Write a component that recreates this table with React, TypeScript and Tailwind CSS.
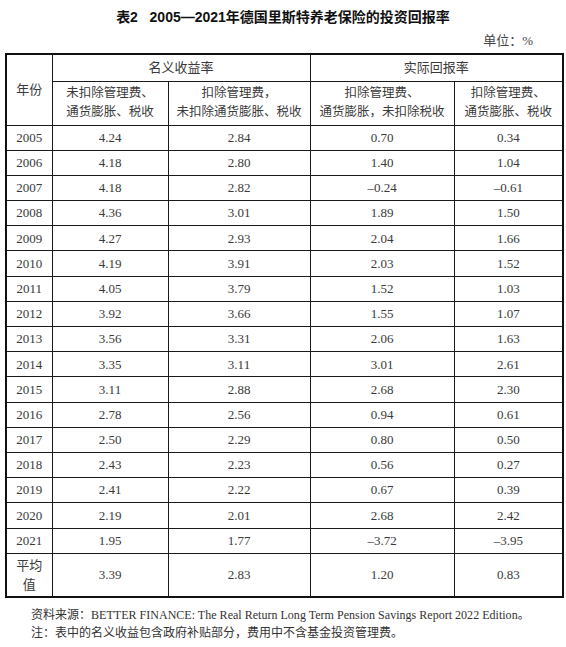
import React from 'react'

const rows: [string, string, string, string, string][] = [
    ['2005', '4.24', '2.84', '0.70', '0.34'],
    ['2006', '4.18', '2.80', '1.40', '1.04'],
    ['2007', '4.18', '2.82', '–0.24', '–0.61'],
    ['2008', '4.36', '3.01', '1.89', '1.50'],
    ['2009', '4.27', '2.93', '2.04', '1.66'],
    ['2010', '4.19', '3.91', '2.03', '1.52'],
    ['2011', '4.05', '3.79', '1.52', '1.03'],
    ['2012', '3.92', '3.66', '1.55', '1.07'],
    ['2013', '3.56', '3.31', '2.06', '1.63'],
    ['2014', '3.35', '3.11', '3.01', '2.61'],
    ['2015', '3.11', '2.88', '2.68', '2.30'],
    ['2016', '2.78', '2.56', '0.94', '0.61'],
    ['2017', '2.50', '2.29', '0.80', '0.50'],
    ['2018', '2.43', '2.23', '0.56', '0.27'],
    ['2019', '2.41', '2.22', '0.67', '0.39'],
    ['2020', '2.19', '2.01', '2.68', '2.42'],
    ['2021', '1.95', '1.77', '–3.72', '–3.95'],
]

const serif = "font-['Liberation_Serif','Noto_Sans_CJK_SC',serif]"
const cell = 'border border-[#1a1a1a] text-center align-middle p-0'

export default function App() {
    return (
        <div className={`w-[566px] h-[647px] bg-white text-[#3a3a3a] ${serif}`}>
            {/* title */}
            <div className="pt-[8px] h-[28px] text-center text-[14px] leading-[18px] font-bold text-[#111] font-['Liberation_Sans','Noto_Sans_CJK_SC',sans-serif]">
                表2&nbsp;&nbsp;&nbsp;2005—2021年德国里斯特养老保险的投资回报率
            </div>
            {/* unit */}
            <div className="h-[25px] flex justify-end pr-[33px] text-[13px] leading-[25px] text-[#444]">
                单位：%
            </div>

            <table className="ml-[5px] w-[557px] border-collapse border-2 border-[#111] table-fixed text-[13px]">
                <colgroup>
                    <col className="w-[46px]" />
                    <col className="w-[116px]" />
                    <col className="w-[142px]" />
                    <col className="w-[144px]" />
                    <col className="w-[109px]" />
                </colgroup>
                <thead>
                    <tr className="h-[27px]">
                        <th rowSpan={2} className={`${cell} font-normal`}>年份</th>
                        <th colSpan={2} className={`${cell} font-normal`}>名义收益率</th>
                        <th colSpan={2} className={`${cell} font-normal`}>实际回报率</th>
                    </tr>
                    <tr className="h-[44px] text-[12.5px] leading-[19px]">
                        <th className={`${cell} font-normal`}>未扣除管理费、<br />通货膨胀、税收</th>
                        <th className={`${cell} font-normal`}>扣除管理费，<br />未扣除通货膨胀、税收</th>
                        <th className={`${cell} font-normal`}>扣除管理费、<br />通货膨胀，未扣除税收</th>
                        <th className={`${cell} font-normal`}>扣除管理费、<br />通货膨胀、税收</th>
                    </tr>
                </thead>
                <tbody>
                    {rows.map(r => (
                        <tr key={r[0]} className="h-[25.2px]">
                            {r.map((v, i) => (
                                <td key={i} className={cell}>{v}</td>
                            ))}
                        </tr>
                    ))}
                    <tr className="h-[44px]">
                        <td className={`${cell} leading-[19px]`}>平均<br />值</td>
                        <td className={cell}>3.39</td>
                        <td className={cell}>2.83</td>
                        <td className={cell}>1.20</td>
                        <td className={cell}>0.83</td>
                    </tr>
                </tbody>
            </table>

            {/* notes */}
            <div className="pl-[31px] pt-[8px] text-[12px] leading-[18px] text-[#333]">
                <p className="tracking-[0.02px]">资料来源：BETTER FINANCE: The Real Return Long Term Pension Savings Report 2022 Edition。</p>
                <p>注：表中的名义收益包含政府补贴部分，费用中不含基金投资管理费。</p>
            </div>
        </div>
    )
}
